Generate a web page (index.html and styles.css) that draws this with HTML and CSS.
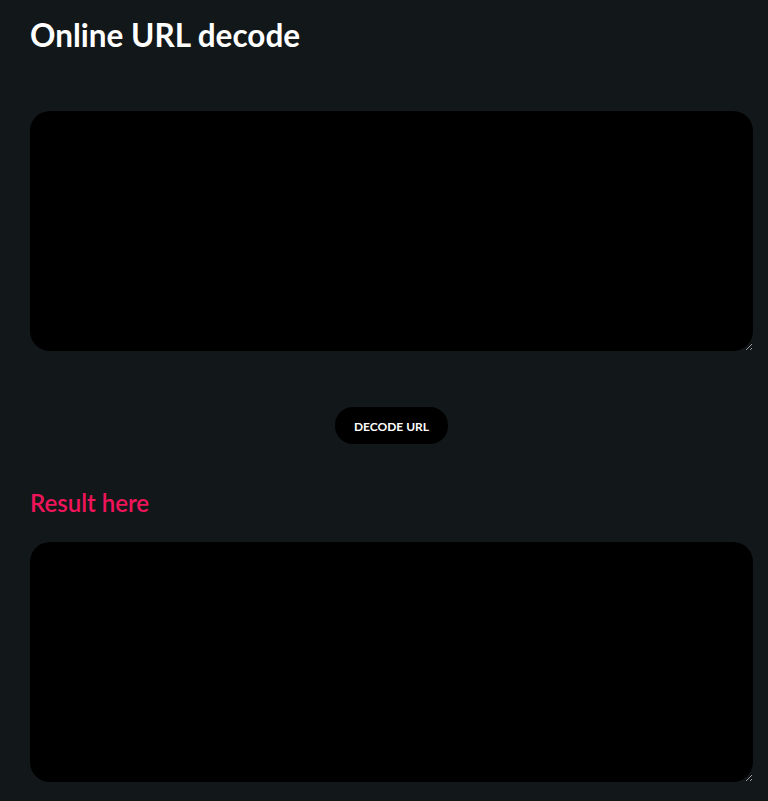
FILE: index.html
```html
<!DOCTYPE html>
<html lang="en">
<head>
<meta charset="utf-8">
<title>Online URL decode</title>
<link rel="stylesheet" href="styles.css">
</head>
<body>
<main class="page">
  <h1 class="title">Online URL decode</h1>
  <textarea class="box box-input"></textarea>
  <div class="actions">
    <button class="btn" type="button">DECODE URL</button>
  </div>
  <h2 class="result-title">Result here</h2>
  <textarea class="box box-output"></textarea>
</main>
</body>
</html>
```
FILE: styles.css
```css
html, body {
  margin: 0;
  padding: 0;
  background: #12171a;
}
body {
  font-family: Lato, "Noto Sans", sans-serif;
  color: #ffffff;
}
.page {
  display: flex;
  flex-direction: column;
  padding: 16px 15px 0 30px;
}
.title {
  margin: 0;
  font-size: 31.5px;
  font-weight: 700;
  line-height: 38px;
  color: #ffffff;
}
.box {
  display: block;
  box-sizing: border-box;
  width: 100%;
  height: 240px;
  margin: 0;
  border: none;
  border-radius: 20px;
  background: #000000;
  color: #ffffff;
  font-family: Lato, sans-serif;
  font-size: 16px;
  padding: 16px 20px;
  outline: none;
}
.box-input {
  margin-top: 57px;
}
.actions {
  display: flex;
  justify-content: center;
  margin-top: 56px;
}
.btn {
  height: 37px;
  padding: 1px 19px 0 19px;
  border: none;
  border-radius: 18px;
  background: #000000;
  color: #ffffff;
  font-family: Lato, sans-serif;
  font-weight: 700;
  font-size: 12px;
}
.result-title {
  margin: 44px 0 0 0;
  font-size: 24px;
  font-weight: 600;
  line-height: 30px;
  color: #f0145a;
}
.box-output {
  margin-top: 24px;
}
```
